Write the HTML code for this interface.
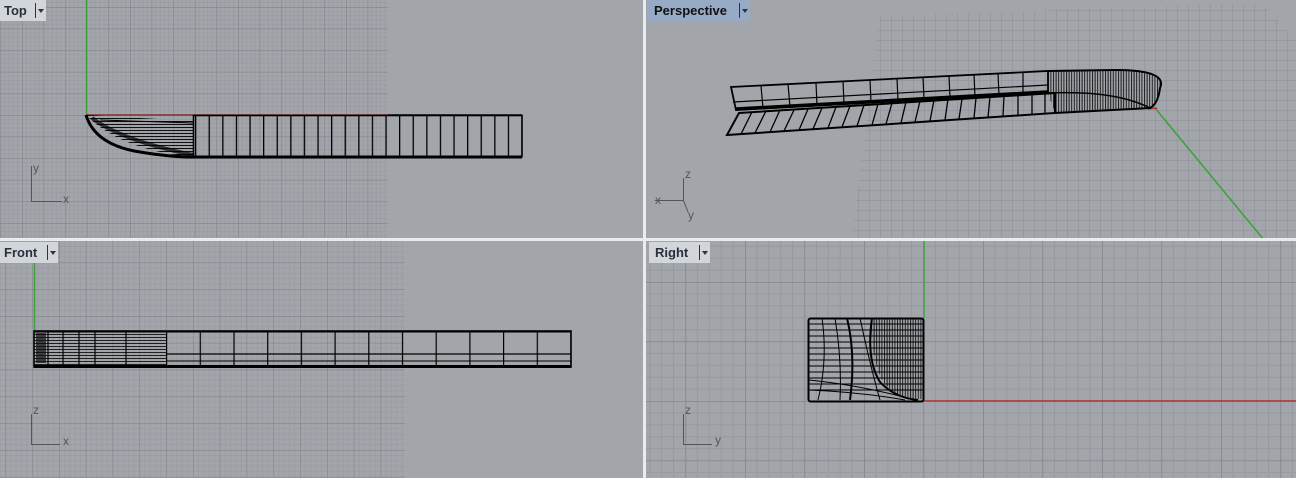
<!DOCTYPE html>
<html><head><meta charset="utf-8"><style>
html,body{margin:0;padding:0;background:#eceef0;}
body{width:1296px;height:478px;position:relative;overflow:hidden;font-family:"Liberation Sans",sans-serif;}
svg{position:absolute;left:0;top:0;}
.tab{position:absolute;height:21px;font-weight:bold;font-size:13px;line-height:21px;color:#2a2f3a;background:#d2d5d9;padding-left:4px;box-sizing:border-box;}
.tab .sep{position:absolute;top:3px;width:1px;height:15px;background:#333;}
.tab .tri{position:absolute;top:9px;width:0;height:0;border-left:3px solid transparent;border-right:3px solid transparent;border-top:4px solid #333;}
</style></head><body>
<svg width="1296" height="478" viewBox="0 0 1296 478" xmlns="http://www.w3.org/2000/svg">
<defs>
<pattern id="gTop" x="0.4" y="7" width="21.6" height="21.6" patternUnits="userSpaceOnUse">
<rect width="21.6" height="21.6" fill="#a2a6ab"/>
<path d="M4.32 0V21.6M8.64 0V21.6M12.96 0V21.6M17.28 0V21.6M0 4.32H21.6M0 8.64H21.6M0 12.96H21.6M0 17.28H21.6" stroke="#999da3" stroke-width="0.8"/>
<path d="M0 0V21.6M0 0H21.6" stroke="#80848a" stroke-width="1.2"/>
</pattern>
<pattern id="gFront" x="5.4" y="-5.6" width="26.8" height="26.8" patternUnits="userSpaceOnUse">
<rect width="26.8" height="26.8" fill="#a2a6ab"/>
<path d="M5.36 0V26.8M10.72 0V26.8M16.08 0V26.8M21.44 0V26.8M0 5.36H26.8M0 10.72H26.8M0 16.08H26.8M0 21.44H26.8" stroke="#999da3" stroke-width="0.8"/>
<path d="M0 0V26.8M0 0H26.8" stroke="#80848a" stroke-width="1.2"/>
</pattern>
<pattern id="gRight" x="685.5" y="401" width="59.5" height="59.5" patternUnits="userSpaceOnUse">
<rect width="59.5" height="59.5" fill="#a2a6ab"/>
<path d="M11.9 0V59.5M23.8 0V59.5M35.7 0V59.5M47.6 0V59.5M0 11.9H59.5M0 23.8H59.5M0 35.7H59.5M0 47.6H59.5" stroke="#969aa0" stroke-width="1"/>
<path d="M0 0V59.5M0 0H59.5" stroke="#7b7f85" stroke-width="1.3"/>
</pattern>
<pattern id="gPersp" x="0" y="0" width="11" height="10" patternUnits="userSpaceOnUse">
<rect width="11" height="10" fill="#a2a6ab"/>
<path d="M0 0V10M0 0H11" stroke="#8a8e94" stroke-width="1"/>
</pattern>
<pattern id="ribTop" x="195" y="0" width="13.6" height="50" patternUnits="userSpaceOnUse">
<path d="M0.5 0V50" stroke="#000" stroke-width="1.6"/>
</pattern>
<pattern id="ribFront" x="166" y="0" width="33.7" height="50" patternUnits="userSpaceOnUse">
<path d="M0.5 0V50" stroke="#000" stroke-width="1.4"/>
</pattern>
<pattern id="hatch" width="3" height="3" patternUnits="userSpaceOnUse">
<path d="M0 1.5H3" stroke="#000" stroke-width="1"/>
</pattern>
<pattern id="hatchV" width="2.6" height="3" patternUnits="userSpaceOnUse">
<path d="M0.5 0V3" stroke="#000" stroke-width="0.9"/>
</pattern>
<clipPath id="cTR"><rect x="646" y="0" width="650" height="238"/></clipPath>
</defs>

<rect x="0" y="0" width="643" height="238" fill="#a2a6ab"/>
<rect x="646" y="0" width="650" height="238" fill="#a2a6ab"/>
<rect x="0" y="241" width="643" height="237" fill="#a2a6ab"/>
<rect x="646" y="241" width="650" height="237" fill="#a2a6ab"/>

<!-- TOP view -->
<rect x="0" y="0" width="388" height="238" fill="url(#gTop)"/>
<line x1="86.5" y1="0" x2="86.5" y2="115" stroke="#3ea23a" stroke-width="1.5"/>
<line x1="86" y1="115" x2="388" y2="115" stroke="#8a2a2a" stroke-width="1.5"/>
<path d="M86 115 L193 121 L193 157 Q120 150 86 115Z" fill="url(#hatch)" opacity="0.9"/>
<path d="M92 118 Q120 140 193 155" fill="none" stroke="#000" stroke-width="4" opacity="0.7"/>
<path d="M86 115 Q95 145 140 152 Q170 157 193 157" fill="none" stroke="#000" stroke-width="3"/>
<line x1="100" y1="120" x2="193" y2="123" stroke="#000" stroke-width="1"/>
<rect x="193" y="115.5" width="329" height="41" fill="url(#ribTop)"/>
<rect x="193.5" y="115.5" width="328.5" height="41" fill="none" stroke="#000" stroke-width="1.6"/>
<line x1="193" y1="157" x2="522" y2="157" stroke="#000" stroke-width="3"/>
<line x1="388" y1="115" x2="522" y2="115" stroke="#000" stroke-width="1.6"/>
<path d="M31.5 166V201.5H62" fill="none" stroke="#555" stroke-width="1"/>
<text x="33" y="172" font-size="12" fill="#555">y</text>
<text x="63" y="203" font-size="12" fill="#555">x</text>

<!-- PERSPECTIVE view -->
<g clip-path="url(#cTR)">
<polygon points="879,16 1262,3 1296,40 1296,238 852,238" fill="url(#gPersp)"/>
<line x1="1155" y1="108" x2="1264" y2="240" stroke="#3ea23a" stroke-width="1.6"/>
<line x1="1148" y1="109" x2="1157" y2="108" stroke="#b03030" stroke-width="1.5"/>
<!-- bottom plate -->
<polygon points="739,113 1055,93 1055,113 727,135" fill="none" stroke="#000" stroke-width="2"/>
<g stroke="#000" stroke-width="1.3">
<line x1="752" y1="112" x2="741" y2="134"/><line x1="766" y1="111" x2="755" y2="133"/><line x1="780" y1="110" x2="770" y2="132"/><line x1="794" y1="110" x2="784" y2="131"/><line x1="808" y1="109" x2="799" y2="130"/><line x1="822" y1="108" x2="813" y2="129"/><line x1="836" y1="107" x2="828" y2="128"/><line x1="850" y1="106" x2="842" y2="127"/><line x1="864" y1="105" x2="857" y2="126"/><line x1="878" y1="104" x2="872" y2="125"/><line x1="892" y1="103" x2="886" y2="124"/><line x1="906" y1="102" x2="901" y2="123"/><line x1="920" y1="101" x2="915" y2="122"/><line x1="934" y1="100" x2="930" y2="121"/><line x1="948" y1="99" x2="945" y2="120"/><line x1="962" y1="99" x2="959" y2="119"/><line x1="976" y1="98" x2="974" y2="118"/><line x1="990" y1="97" x2="988" y2="117"/><line x1="1004" y1="96" x2="1003" y2="116"/><line x1="1018" y1="95" x2="1018" y2="115"/><line x1="1032" y1="94" x2="1032" y2="114"/><line x1="1045" y1="94" x2="1045" y2="114"/>
</g>
<!-- side wall -->
<polygon points="731,87 1048,71 1048,93 736,110" fill="none" stroke="#000" stroke-width="1.8"/>
<line x1="733" y1="102" x2="1048" y2="85" stroke="#000" stroke-width="1.2"/>
<line x1="736" y1="109" x2="1048" y2="92" stroke="#000" stroke-width="3.5"/>
<g stroke="#000" stroke-width="1.2">
<line x1="761" y1="86" x2="763" y2="108"/><line x1="788" y1="84" x2="790" y2="107"/><line x1="816" y1="83" x2="817" y2="105"/><line x1="843" y1="81" x2="844" y2="104"/><line x1="870" y1="80" x2="871" y2="102"/><line x1="897" y1="78" x2="898" y2="101"/><line x1="923" y1="77" x2="924" y2="99"/><line x1="949" y1="76" x2="950" y2="98"/><line x1="974" y1="74" x2="975" y2="97"/><line x1="998" y1="73" x2="999" y2="96"/><line x1="1023" y1="72" x2="1023" y2="94"/>
</g>
<!-- bow -->
<path d="M1048 71 L1115 70 Q1168 70 1160 88 Q1158 104 1150 108 L1055 113 L1048 93Z" fill="url(#hatchV)" opacity="0.9"/>
<path d="M1048 71 L1115 70 Q1168 70 1160 88 Q1158 104 1150 108 L1055 113" fill="none" stroke="#000" stroke-width="2"/>
<path d="M1048 93 Q1115 90 1150 108" fill="none" stroke="#000" stroke-width="1.5"/>
</g>
<path d="M683.5 178V201.5" fill="none" stroke="#555" stroke-width="1"/>
<path d="M655 200.5H683.5L688 212" fill="none" stroke="#555" stroke-width="1"/>
<text x="685" y="178" font-size="12" fill="#555">z</text>
<text x="655" y="204" font-size="12" fill="#555">x</text>
<text x="688" y="219" font-size="12" fill="#555">y</text>

<!-- FRONT view -->
<rect x="0" y="241" width="405" height="237" fill="url(#gFront)"/>
<line x1="34.5" y1="262" x2="34.5" y2="331" stroke="#3ea23a" stroke-width="1.5"/>
<line x1="34" y1="367" x2="45" y2="367" stroke="#b03030" stroke-width="1.5"/>
<rect x="34" y="331" width="132" height="36" fill="url(#hatch)" opacity="0.8"/>
<g stroke="#000" stroke-width="1.2"><line x1="48" y1="331" x2="48" y2="367"/><line x1="63" y1="331" x2="63" y2="367"/><line x1="79" y1="331" x2="79" y2="367"/><line x1="95" y1="331" x2="95" y2="367"/><line x1="126" y1="331" x2="126" y2="367"/></g>
<rect x="36" y="333" width="10" height="30" fill="#111" opacity="0.7"/>
<rect x="166" y="331" width="405" height="36" fill="url(#ribFront)"/>
<rect x="34" y="331" width="537" height="36" fill="none" stroke="#000" stroke-width="1.6"/>
<line x1="34" y1="331.5" x2="571" y2="331.5" stroke="#000" stroke-width="2"/>
<line x1="166" y1="354" x2="571" y2="354" stroke="#000" stroke-width="1.2"/>
<line x1="166" y1="361" x2="571" y2="361" stroke="#000" stroke-width="1"/>
<line x1="34" y1="366.5" x2="571" y2="366.5" stroke="#000" stroke-width="3"/>
<path d="M31.5 414V444.5H60" fill="none" stroke="#555" stroke-width="1"/>
<text x="33" y="414" font-size="12" fill="#555">z</text>
<text x="63" y="445" font-size="12" fill="#555">x</text>

<!-- RIGHT view -->
<rect x="646" y="241" width="650" height="237" fill="url(#gRight)"/>
<line x1="924" y1="241" x2="924" y2="318" stroke="#3ea23a" stroke-width="1.5"/>
<line x1="924" y1="401" x2="1296" y2="401" stroke="#b03030" stroke-width="1.5"/>
<path d="M872 319H923V399H915Q885 395 878 370Q870 345 872 319Z" fill="url(#hatchV)" opacity="0.9"/>
<g fill="none" stroke="#000" stroke-width="1">
<path d="M809 324H923M809 330H923M809 336H923M809 342H923M809 348H923M809 354H923M809 360H923M809 366H923M809 372H923M809 378H923M809 384H923M809 390H923"/>
<path d="M822 318Q828 360 818 400M835 318Q842 360 840 400M860 318Q870 365 880 400"/>
<path d="M809 380Q860 385 915 400M809 390Q860 392 905 400"/>
</g>
<g fill="none" stroke="#000" stroke-width="2">
<path d="M847 318Q856 355 850 400"/>
<path d="M872 318Q866 360 880 382Q895 398 918 400"/>
</g>
<rect x="808.5" y="318.5" width="115" height="83" rx="2" fill="none" stroke="#000" stroke-width="2"/>
<path d="M683.5 414V444.5H712" fill="none" stroke="#555" stroke-width="1"/>
<text x="685" y="414" font-size="12" fill="#555">z</text>
<text x="715" y="444" font-size="12" fill="#555">y</text>

<rect x="643" y="0" width="3" height="478" fill="#e9ecef"/>
<rect x="0" y="238" width="1296" height="3" fill="#e9ecef"/>
</svg>

<div class="tab" style="left:0;top:0;width:46px;">Top<span class="sep" style="left:35px"></span><span class="tri" style="left:38px"></span></div>
<div class="tab" style="left:647px;top:0;width:103px;background:#97abc6;color:#111;padding-left:7px;">Perspective<span class="sep" style="left:92px"></span><span class="tri" style="left:95px"></span></div>
<div class="tab" style="left:0;top:242px;width:58px;">Front<span class="sep" style="left:47px"></span><span class="tri" style="left:50px"></span></div>
<div class="tab" style="left:649px;top:242px;width:61px;padding-left:6px;">Right<span class="sep" style="left:50px"></span><span class="tri" style="left:53px"></span></div>
</body></html>
